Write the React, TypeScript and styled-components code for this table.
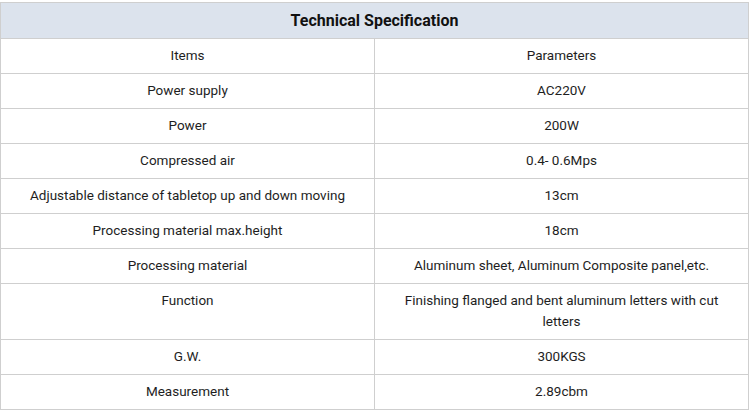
import React from 'react';
import styled, { createGlobalStyle } from 'styled-components';

const GlobalStyle = createGlobalStyle`
  html, body {
    margin: 0;
    padding: 0;
    background: #ffffff;
  }
  body {
    font-family: Roboto, 'Liberation Sans', Arial, sans-serif;
  }
`;

interface SpecRow {
  item: string;
  value: string;
}

const rows: SpecRow[] = [
  { item: 'Items', value: 'Parameters' },
  { item: 'Power supply', value: 'AC220V' },
  { item: 'Power', value: '200W' },
  { item: 'Compressed air', value: '0.4- 0.6Mps' },
  { item: 'Adjustable distance of tabletop up and down moving', value: '13cm' },
  { item: 'Processing material max.height', value: '18cm' },
  {
    item: 'Processing material',
    value: 'Aluminum sheet, Aluminum Composite panel,etc.',
  },
  {
    item: 'Function',
    value: 'Finishing flanged and bent aluminum letters with cut letters',
  },
  { item: 'G.W.', value: '300KGS' },
  { item: 'Measurement', value: '2.89cbm' },
];

const App: React.FC = () => {
  return (
    <>
      <GlobalStyle />
      <Page>
        <SpecTable>
          <thead>
            <tr>
              <HeadCell colSpan={2}>Technical Specification</HeadCell>
            </tr>
          </thead>
          <tbody>
            {rows.map((row, index) => (
              <tr key={index}>
                <Cell>{row.item}</Cell>
                <Cell>
                  <CellText>{row.value}</CellText>
                </Cell>
              </tr>
            ))}
          </tbody>
        </SpecTable>
      </Page>
    </>
  );
};

const Page = styled.div`
  padding-top: 2px;
  width: 749px;
`;

const SpecTable = styled.table`
  width: 749px;
  border-collapse: collapse;
  table-layout: fixed;
  color: #1e1e1e;
  font-size: 13.5px;
`;

const HeadCell = styled.th`
  background: #dce3ed;
  border: 1px solid #cfcfcf;
  height: 35px;
  padding: 0 8px;
  font-size: 16px;
  font-weight: 700;
  color: #111111;
  text-align: center;
  vertical-align: middle;
`;

const Cell = styled.td`
  border: 1px solid #cfcfcf;
  padding: 6px 8px 7px;
  line-height: 21px;
  text-align: center;
  vertical-align: top;
  width: 50%;
`;

const CellText = styled.span`
  display: inline-block;
  max-width: 330px;
`;

export default App;
